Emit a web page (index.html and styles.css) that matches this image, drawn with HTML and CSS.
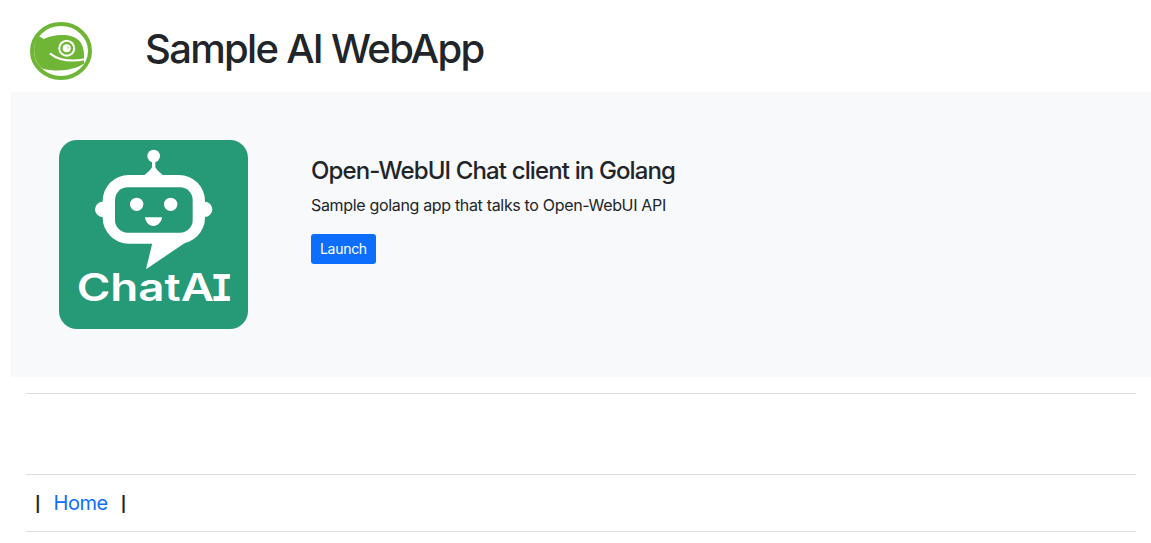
FILE: index.html
```html
<!DOCTYPE html>
<html lang="en">
<head>
    <meta charset="UTF-8">
    <meta name="viewport" content="width=device-width, initial-scale=1.0">
    <title>Sample AI WebApp</title>
    <link rel="stylesheet" href="styles.css">
</head>
<body>
    <!-- Header -->
    <header class="top-bar">
        <svg class="site-logo" viewBox="91 68 184 170" preserveAspectRatio="none" role="img" aria-label="openSUSE logo">
            <ellipse cx="183" cy="153" rx="86" ry="79" fill="#fff" stroke="#6fb536" stroke-width="12"/>
            <path fill="#6fb536" d="M118 110 L132 118 C165 103 215 100 238 124 C250 138 253 160 251 180 L252 190 C222 210 170 216 128 204 C104 190 92 140 118 110 Z"/>
            <path fill="none" stroke="#fff" stroke-width="6" d="M150 160 C175 180 210 186 254 177"/>
            <circle cx="200" cy="145" r="25" fill="#fff"/>
            <circle cx="200" cy="145" r="19" fill="#6fb536"/>
            <circle cx="200" cy="145" r="12" fill="#fff"/>
            <circle cx="204" cy="143" r="4" fill="#cfe6bb"/>
        </svg>
        <h1 class="site-title">Sample AI WebApp</h1>
    </header>

    <!-- App card -->
    <section class="app-panel">
        <svg class="app-icon" viewBox="27 30 567 567" role="img" aria-label="ChatAI">
            <rect x="27" y="30" width="567" height="567" rx="54" fill="#269976"/>
            <circle cx="311" cy="78" r="19" fill="#fff"/>
            <path fill="#fff" d="M306 90 H316 V112 C322 122 332 130 345 140 H277 C290 130 300 122 306 112 Z"/>
            <circle cx="158" cy="238" r="23" fill="#fff"/>
            <circle cx="464" cy="238" r="23" fill="#fff"/>
            <rect x="158" y="135" width="307" height="206" rx="78" fill="#fff"/>
            <path fill="#fff" d="M308 335 L288 418 L410 335 Z"/>
            <rect x="195" y="172" width="233" height="136" rx="38" fill="#269976"/>
            <circle cx="260" cy="223" r="20" fill="#fff"/>
            <circle cx="362" cy="223" r="20" fill="#fff"/>
            <path fill="#fff" d="M285 262 H336 C334 278 323 288 310 288 C297 288 287 278 285 262 Z"/>
            <text class="app-icon-text" x="80" y="513" textLength="412" lengthAdjust="spacingAndGlyphs">ChatA</text>
            <text class="app-icon-text app-icon-serif" x="481" y="513" textLength="68" lengthAdjust="spacingAndGlyphs">I</text>
        </svg>
        <div class="app-info">
            <h4 class="app-name">Open-WebUI Chat client in Golang</h4>
            <p class="app-desc">Sample golang app that talks to Open-WebUI API</p>
            <a class="btn-launch" href="#">Launch</a>
        </div>
    </section>

    <!-- Footer -->
    <div class="page-bottom">
        <hr class="rule">
        <div class="spacer"></div>
        <hr class="rule">
        <nav class="foot-nav">
            <span class="pipe">|</span>
            <a href="#">Home</a>
            <span class="pipe">|</span>
        </nav>
        <hr class="rule">
    </div>
</body>
</html>
```

FILE: styles.css
```css
* {
    box-sizing: border-box;
}
body {
    margin: 0;
    font-family: Inter, "Liberation Sans", sans-serif;
    color: #212529;
    background-color: #fff;
    font-size: 16px;
}
.top-bar {
    height: 92px;
    padding: 22px 0 0 30px;
    display: flex;
    align-items: flex-start;
}
.site-logo {
    width: 62px;
    height: 58px;
    flex-shrink: 0;
}
.site-title {
    margin: 3px 0 0 53px;
    font-size: 40px;
    font-weight: 500;
    line-height: 48px;
    letter-spacing: -1.7px;
}
.app-panel {
    margin-left: 11px;
    height: 285px;
    background-color: #f8f9fa;
    padding: 48px;
    display: flex;
    align-items: flex-start;
}
.app-icon {
    width: 189px;
    height: 189px;
    flex-shrink: 0;
}
.app-icon-text {
    font-family: Inter, sans-serif;
    font-size: 114px;
    font-weight: 600;
    fill: #fff;
}
.app-icon-serif {
    font-family: "DejaVu Sans Mono", monospace;
    font-weight: 700;
}
.app-info {
    margin: 15px 0 0 63px;
}
.app-name {
    margin: 0 0 6px;
    font-size: 24px;
    font-weight: 500;
    line-height: 32px;
    letter-spacing: -0.87px;
}
.app-desc {
    margin: 0 0 17px;
    font-size: 16px;
    line-height: 24px;
    letter-spacing: -0.33px;
}
.btn-launch {
    display: inline-block;
    padding: 5px 9px;
    font-size: 14px;
    line-height: 20px;
    letter-spacing: -0.3px;
    color: #fff;
    background-color: #0d6efd;
    border-radius: 3px;
    text-decoration: none;
}
.page-bottom {
    padding: 16px 15px 0 26px;
}
.rule {
    margin: 0;
    border: 0;
    border-top: 1px solid #dedede;
}
.spacer {
    height: 80px;
}
.foot-nav {
    height: 56px;
    padding-left: 9px;
    display: flex;
    align-items: center;
    gap: 13px;
    font-size: 20px;
}
.foot-nav a {
    color: #0d6efd;
    letter-spacing: -0.5px;
    text-decoration: none;
}
.pipe {
    font-size: 15px;
    font-weight: 700;
}
```
